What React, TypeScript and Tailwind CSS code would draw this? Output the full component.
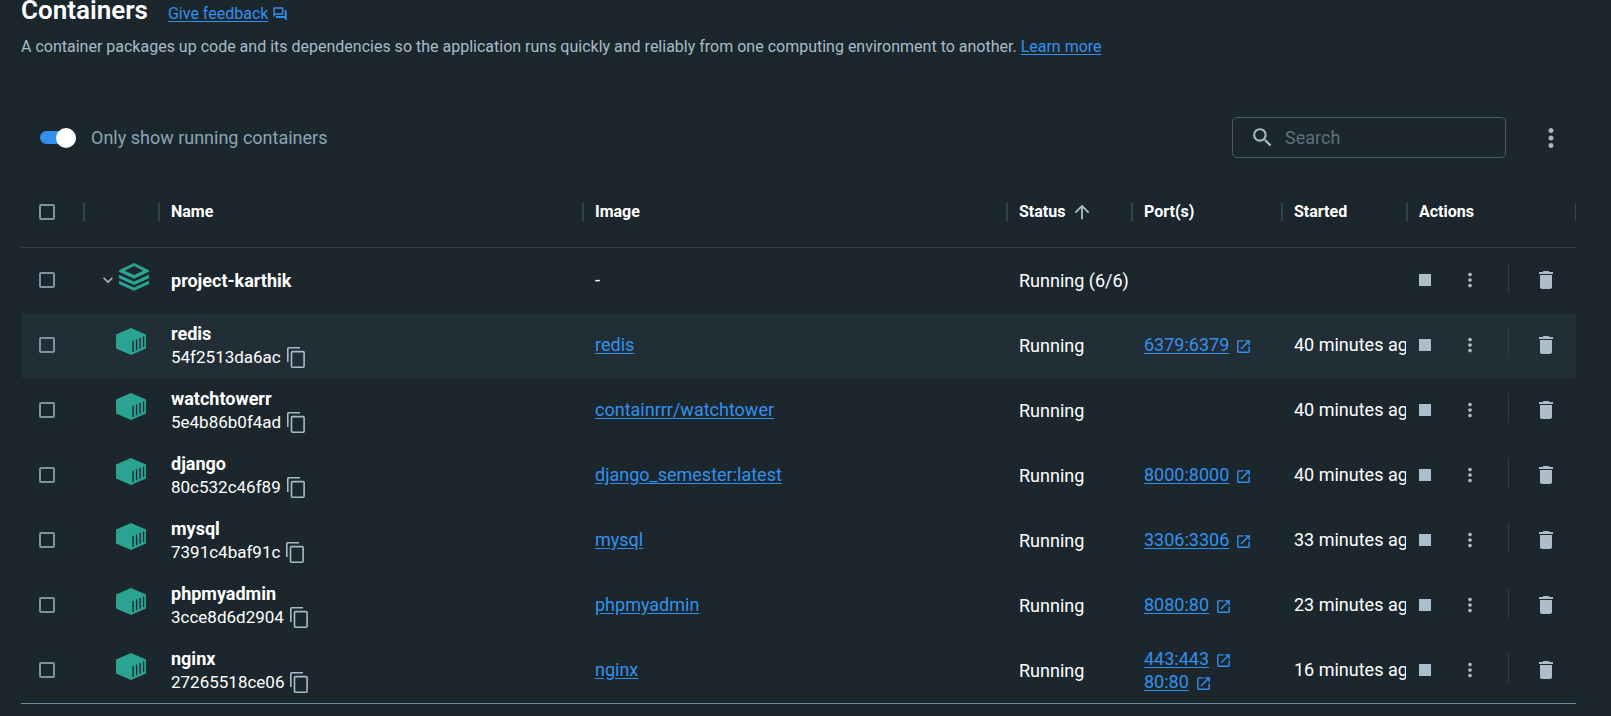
import { MdArrowUpward, MdDelete, MdKeyboardArrowDown, MdMoreVert, MdOpenInNew, MdOutlineForum, MdSearch } from "react-icons/md";

type Container = {
  name: string;
  id: string;
  image: string;
  ports: string[];
  started: string;
  highlighted?: boolean;
};

const containers: Container[] = [
  { name: "redis", id: "54f2513da6ac", image: "redis", ports: ["6379:6379"], started: "40 minutes ago", highlighted: true },
  { name: "watchtowerr", id: "5e4b86b0f4ad", image: "containrrr/watchtower", ports: [], started: "40 minutes ago" },
  { name: "django", id: "80c532c46f89", image: "django_semester:latest", ports: ["8000:8000"], started: "40 minutes ago" },
  { name: "mysql", id: "7391c4baf91c", image: "mysql", ports: ["3306:3306"], started: "33 minutes ago" },
  { name: "phpmyadmin", id: "3cce8d6d2904", image: "phpmyadmin", ports: ["8080:80"], started: "23 minutes ago" },
  { name: "nginx", id: "27265518ce06", image: "nginx", ports: ["443:443", "80:80"], started: "16 minutes ago" },
];

const link = "text-[#3391ee] underline underline-offset-2";
const cell = "p-0 pb-0.5 pl-[13px]";
const selectCell = "p-0 pb-0.5 pl-[18px]";

function Checkbox({ label }: { label: string }) {
  return (
    <input
      type="checkbox"
      aria-label={label}
      className="block size-4 appearance-none rounded-xs border-2 border-[#7b93a2] checked:bg-[#3391ee]"
    />
  );
}

function StackIcon() {
  return (
    <svg viewBox="0 0 30 28" className="h-7 w-[30px] shrink-0" fill="#2aa391" aria-hidden="true">
      <path fillRule="evenodd" d="M15 0 30 7.2v1.6L15 15.8 0 8.8V7.2ZM15 3.1 5.8 7.7 15 12l9.2-4.3Z" />
      <path d="M0 11.8 15 18.6l15-6.8v3.4L15 22 0 15.2Z" />
      <path d="M0 17.8 15 24.5l15-6.7v3.3L15 27.8 0 21.1Z" />
    </svg>
  );
}

function ContainerIcon() {
  return (
    <svg viewBox="0 0 30 27" className="h-[27px] w-[30px]" aria-hidden="true">
      <path fill="#2aa391" d="M15 0 30 6.5v14L15 27 0 20.5v-14Z" />
      <path stroke="#1c272d" strokeWidth="1.3" d="M17.1 12.8v11.1M20.6 11.4v10.9M24.1 9.9v10.8M27.6 8.5v10.6" />
    </svg>
  );
}

function CopyIcon() {
  return (
    <svg viewBox="0 0 18 21" className="h-[21px] w-[18px]" fill="none" stroke="#a9bbc8" strokeWidth="1.6" aria-hidden="true">
      <path d="M.8 15V1.8a1 1 0 0 1 1-1H13" />
      <rect x="4.5" y="4.6" width="12.6" height="15.6" rx="1" />
    </svg>
  );
}

function HeaderCell({ label, sorted }: { label: string; sorted?: boolean }) {
  return (
    <th scope="col" className="p-0 text-left font-bold" aria-sort={sorted ? "ascending" : undefined}>
      <div className="flex h-[18px] items-center gap-1.5 border-l-2 border-[#2f424f] pl-[11px]">
        {label}
        {sorted && <MdArrowUpward className="size-[22px] text-[#a9bbc8]" />}
      </div>
    </th>
  );
}

function Actions({ name }: { name: string }) {
  return (
    <td className="p-0 pb-0.5">
      <div className="flex items-center text-[#adbecb]">
        <button type="button" aria-label={`Stop ${name}`} className="ml-[13px] flex size-3 bg-[#adbecb]" />
        <button type="button" aria-label={`More actions for ${name}`} className="ml-7">
          <MdMoreVert className="size-[22px]" />
        </button>
        <span className="mb-1 ml-[27px] h-[30px] w-px bg-[#303e47]" />
        <button type="button" aria-label={`Delete ${name}`} className="ml-[25px]">
          <MdDelete className="size-6" />
        </button>
      </div>
    </td>
  );
}

export default function App() {
  return (
    <main className="min-h-screen bg-[#1c272d] pr-[35px] pb-3 pl-[21px] font-['Roboto',sans-serif] text-lg text-white">
      <header>
        <div className="flex h-7 items-baseline gap-5">
          <h1 className="text-[26px] leading-5 font-semibold">Containers</h1>
          <a href="#feedback" className="flex items-center gap-1 text-base leading-6 text-[#3391ee]">
            <span className="underline underline-offset-2">Give feedback</span>
            <MdOutlineForum className="size-4" />
          </a>
        </div>
        <p className="mt-[7px] text-base leading-6 text-[#a9bbc8]">
          A container packages up code and its dependencies so the application runs quickly and reliably from one computing
          environment to another. <a href="#learn" className={link}>Learn more</a>
        </p>
      </header>

      <div className="mt-[58px] flex h-[41px] items-center">
        <label className="flex flex-1 items-center gap-[15px] pl-[19px] text-[#8ba5b5]">
          <input
            type="checkbox"
            role="switch"
            defaultChecked
            className="relative h-[13px] w-9 appearance-none rounded-full bg-[#3391ee] before:absolute before:-top-[3px] before:right-0 before:size-5 before:rounded-full before:bg-white before:content-['']"
          />
          Only show running containers
        </label>
        <label className="flex h-full w-[274px] items-center gap-2.5 rounded-[5px] border border-[#465c6c] pl-[17px]">
          <MdSearch className="size-[25px] text-[#a9bbc8]" />
          <input type="search" aria-label="Search" placeholder="Search" className="w-0 flex-1 bg-transparent outline-none placeholder:text-[#5f707b]" />
        </label>
        <button type="button" aria-label="Table options" className="mr-2.5 ml-[30px] text-[#a9bbc8]">
          <MdMoreVert className="size-[30px]" />
        </button>
      </div>

      <table className="mt-[19px] w-full table-fixed border-separate border-spacing-0 border-b border-[#6f8b9e]">
        <colgroup>
          <col className="w-[62px]" />
          <col className="w-[75px]" />
          <col />
          <col />
          <col className="w-[125px]" />
          <col className="w-[150px]" />
          <col className="w-[125px]" />
          <col className="w-[170px]" />
        </colgroup>
        <thead>
          <tr className="h-[71px] text-base [&>th]:border-b [&>th]:border-[#303e47]">
            <th className="py-0 pr-0 pl-[18px]"><Checkbox label="Select all containers" /></th>
            <HeaderCell label="" />
            <HeaderCell label="Name" />
            <HeaderCell label="Image" />
            <HeaderCell label="Status" sorted />
            <HeaderCell label="Port(s)" />
            <HeaderCell label="Started" />
            <th scope="col" className="p-0 text-left font-bold">
              <div className="flex h-[18px] items-center border-r border-l-2 border-[#2f424f] pl-[11px]">Actions</div>
            </th>
          </tr>
        </thead>
        <tbody>
          <tr className="h-[65px]">
            <td className={selectCell}><Checkbox label="Select project-karthik" /></td>
            <td className="p-0">
              <div className="flex items-center gap-px pb-[7px] pl-[15px]">
                <button type="button" aria-label="Collapse project-karthik" className="mt-1.5 text-[#a9bbc8]">
                  <MdKeyboardArrowDown className="size-5" />
                </button>
                <StackIcon />
              </div>
            </td>
            <td className="p-0 pl-[13px] font-bold">project-karthik</td>
            <td className={cell}>-</td>
            <td className="p-0 pl-[13px] whitespace-nowrap">Running (6/6)</td>
            <td />
            <td />
            <Actions name="project-karthik" />
          </tr>
          {containers.map((c) => (
            <tr key={c.name} className={c.highlighted ? "h-[65px] bg-[#222e35]" : "h-[65px]"}>
              <td className={selectCell}><Checkbox label={`Select ${c.name}`} /></td>
              <td className="p-0 pb-2 pl-[33px]"><ContainerIcon /></td>
              <td className="p-0 pl-[13px]">
                <div className="leading-6 font-bold">{c.name}</div>
                <div className="flex items-center gap-1.5 text-[17px] leading-[23px]">
                  {c.id}
                  <button type="button" aria-label={`Copy ${c.name} id`}><CopyIcon /></button>
                </div>
              </td>
              <td className={cell}><a href={`#${c.name}`} className={link}>{c.image}</a></td>
              <td className="p-0 pl-[13px]">Running</td>
              <td className={cell}>
                {c.ports.map((port) => (
                  <a key={port} href={`#port-${port}`} className="flex items-center gap-1.5 leading-[23px] text-[#3391ee]">
                    <span className="underline underline-offset-2">{port}</span>
                    <MdOpenInNew className="mt-1 size-[17px]" />
                  </a>
                ))}
              </td>
              <td className={`${cell} overflow-hidden whitespace-nowrap`}>{c.started}</td>
              <Actions name={c.name} />
            </tr>
          ))}
        </tbody>
      </table>
    </main>
  );
}
